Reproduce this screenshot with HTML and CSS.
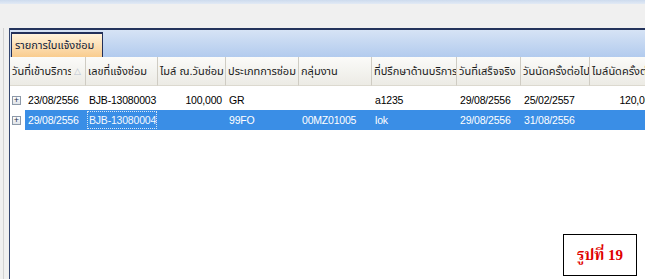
FILE: index.html
```html
<!DOCTYPE html>
<html lang="th">
<head>
  <meta charset="UTF-8">
  <title>รายการใบแจ้งซ่อม</title>
  <link rel="stylesheet" href="styles.css">
</head>
<body>

<div class="top-strip"></div>
<div class="toolbar-space"></div>

<div class="workspace">
  <div class="frame">
    <div class="panel">
      <div class="tabstrip">
        <div class="tab">รายการใบแจ้งซ่อม</div>
      </div>

      <div class="grid">
        <div class="hd hd-first"><span class="hd-text">วันที่เข้าบริการ</span><span class="sort">&#9651;</span></div>
        <div class="hd">เลขที่แจ้งซ่อม</div>
        <div class="hd">ไมล์ ณ.วันซ่อม</div>
        <div class="hd">ประเภทการซ่อม</div>
        <div class="hd">กลุ่มงาน</div>
        <div class="hd">ที่ปรึกษาด้านบริการ</div>
        <div class="hd">วันที่เสร็จจริง</div>
        <div class="hd">วันนัดครั้งต่อไป</div>
        <div class="hd hd-last">ไมล์นัดครั้งต่อไป</div>

        <div class="row first">
          <div class="exp"><span class="plus">+</span></div>
          <div class="cell">23/08/2556</div>
          <div class="cell">BJB-13080003</div>
          <div class="cell num">100,000</div>
          <div class="cell">GR</div>
          <div class="cell"></div>
          <div class="cell">a1235</div>
          <div class="cell">29/08/2556</div>
          <div class="cell">25/02/2557</div>
          <div class="cell num">120,000</div>
        </div>

        <div class="row selected">
          <div class="exp"><span class="plus">+</span></div>
          <div class="cell">29/08/2556</div>
          <div class="cell focus">BJB-13080004</div>
          <div class="cell num"></div>
          <div class="cell">99FO</div>
          <div class="cell">00MZ01005</div>
          <div class="cell">lok</div>
          <div class="cell">29/08/2556</div>
          <div class="cell">31/08/2556</div>
          <div class="cell num"></div>
        </div>
      </div>
    </div>
  </div>
</div>

<div class="caption-box">รูปที่ 19</div>

</body>
</html>
```

FILE: styles.css
```css
body {
  margin: 0;
  height: 279px;
  overflow: hidden;
  background-color: #f0f0f0;
  font-family: "Liberation Sans", "Noto Sans Thai", "Noto Sans", sans-serif;
  font-size: 11px;
  color: #000;
  position: relative;
}

.top-strip {
  height: 4px;
  background: linear-gradient(#cddbee, #e2eaf5);
}

.toolbar-space {
  height: 24px;
}

.workspace {
  padding-left: 3px;
  height: 251px;
}

.frame {
  height: 100%;
  border-left: 1px solid #d2d2d2;
  padding-left: 5px;
}

.panel {
  height: 100%;
  width: 700px;
  border-left: 1px solid #34466f;
  background-color: #fff;
}

/* tab strip */

.tabstrip {
  height: 27px;
  border-top: 2px solid #24335c;
  background: linear-gradient(#d6e3f5, #b2cbee);
  display: flex;
  align-items: flex-end;
}

.tab {
  margin-left: 1px;
  width: 87px;
  height: 23px;
  line-height: 23px;
  padding-left: 3px;
  border: 1px solid #22305a;
  border-top-width: 2px;
  border-bottom: none;
  background: linear-gradient(#fff3dc, #f9cc8e);
  color: #101c3c;
  white-space: nowrap;
}

/* grid */

.grid {
  display: grid;
  grid-template-columns: 15px 61px 72px 68px 73px 73px 85px 64px 69px 70px;
}

.hd {
  height: 28px;
  line-height: 29px;
  padding: 0 2px;
  white-space: nowrap;
  overflow: hidden;
  background: linear-gradient(#fbfbf9, #ecebe5);
  border-bottom: 1px solid #dcd9cf;
  border-right: 1px solid #cfccc3;
  color: #1a1a1a;
}

.hd-first {
  grid-column: span 2;
  display: flex;
}

.hd-text {
  overflow: hidden;
  flex: 1;
}

.hd-last {
  overflow: visible;
}

.sort {
  color: #b9c3cf;
  font-size: 9px;
  padding: 0 2px 0 3px;
}

.row {
  display: contents;
}

.row .exp,
.row .cell {
  height: 20px;
  line-height: 20px;
  white-space: nowrap;
  overflow: hidden;
}

.row.first .exp,
.row.first .cell {
  margin-top: 4px;
}

.cell {
  padding: 0 1px 0 3px;
  font-size: 10.5px;
  letter-spacing: -0.2px;
}

.num {
  text-align: right;
  padding-right: 4px;
}

.exp {
  display: flex;
  align-items: center;
  padding-left: 2px;
}

.plus {
  width: 7px;
  height: 7px;
  border: 1px solid #8d99a8;
  background: linear-gradient(#fff, #dfe3e8);
  font-size: 9px;
  line-height: 7px;
  text-align: center;
  color: #26344e;
}

.selected .cell {
  background-color: #3a8ee6;
  color: #fff;
}

.selected .focus {
  outline: 1px dotted #d8e6f5;
  outline-offset: -2px;
  color: #f4f8fd;
}

/* figure label pasted on the screenshot */

.caption-box {
  position: absolute;
  left: 563px;
  top: 234px;
  width: 72px;
  height: 40px;
  border: 1px solid #000;
  background-color: #fff;
  color: #e00000;
  font-family: "Liberation Serif", "Noto Serif Thai", serif;
  font-weight: bold;
  font-size: 15px;
  line-height: 40px;
  text-align: center;
}
```
